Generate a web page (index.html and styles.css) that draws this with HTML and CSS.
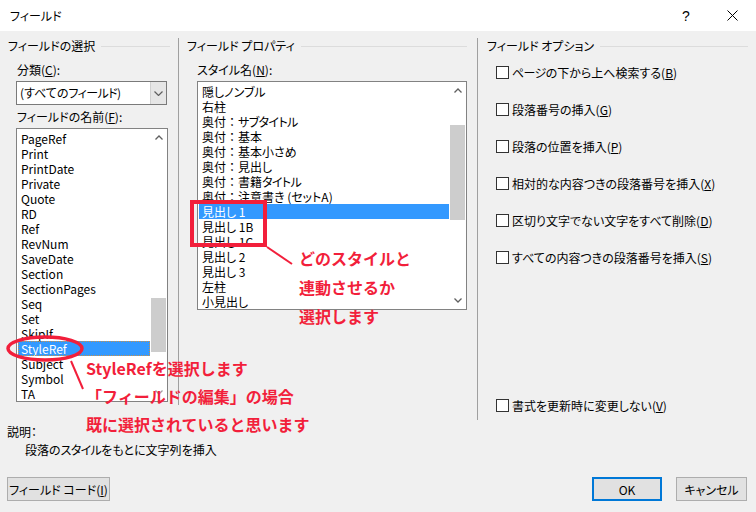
FILE: index.html
```html
<!DOCTYPE html>
<html>
	<head>
		<meta charset="UTF-8">
		<title>フィールド</title>
		<link rel="stylesheet" href="styles.css">
	</head>
	<body>
		<div class="dialog">
			<div class="titlebar">
				<span class="title">フィールド</span>
				<span class="tb-help">?</span>
				<span class="tb-close">
					<svg width="11" height="11" viewBox="0 0 11 11"><path d="M0.5 0.5 L10.5 10.5 M10.5 0.5 L0.5 10.5" stroke="#000" stroke-width="1" fill="none"/></svg>
				</span>
			</div>

			<div class="main">
				<section class="group group-select">
					<div class="group-head"><span>フィールドの選択</span></div>
					<div class="label">分類(<u>C</u>):</div>
					<div class="combo">
						<span class="combo-text">(すべての<span class="kana">フィールド</span>)</span>
						<span class="combo-btn">
							<svg width="9" height="5" viewBox="0 0 9 5"><path d="M0.5 0.5 L4.5 4.5 L8.5 0.5" stroke="#606060" stroke-width="1.2" fill="none"/></svg>
						</span>
					</div>
					<div class="label label-gap">フィールドの名前(<u>F</u>):</div>
					<div class="listbox list-fields">
						<ul class="items">
							<li>PageRef</li>
							<li>Print</li>
							<li>PrintDate</li>
							<li>Private</li>
							<li>Quote</li>
							<li>RD</li>
							<li>Ref</li>
							<li>RevNum</li>
							<li>SaveDate</li>
							<li>Section</li>
							<li>SectionPages</li>
							<li>Seq</li>
							<li>Set</li>
							<li>SkipIf</li>
							<li class="selected">StyleRef</li>
							<li>Subject</li>
							<li>Symbol</li>
							<li>TA</li>
						</ul>
						<div class="sb">
							<span class="sb-arrow"><svg width="8" height="5" viewBox="0 0 8 5"><path d="M0.5 4.5 L4 1 L7.5 4.5" stroke="#606060" stroke-width="1.3" fill="none"/></svg></span>
							<div class="sb-track"><span class="thumb thumb-fields"></span></div>
							<span class="sb-arrow"><svg width="8" height="5" viewBox="0 0 8 5"><path d="M0.5 0.5 L4 4 L7.5 0.5" stroke="#a0a0a0" stroke-width="1.3" fill="none"/></svg></span>
						</div>
					</div>
				</section>

				<section class="group group-props">
					<div class="group-head"><span>フィールド プロパティ</span></div>
					<div class="label">スタイル名(<u>N</u>):</div>
					<div class="listbox list-styles">
						<ul class="items">
							<li>隠しノンブル</li>
							<li>右柱</li>
							<li>奥付<span class="fw">：</span><span class="kana">サブタイトル</span></li>
							<li>奥付<span class="fw">：</span>基本</li>
							<li>奥付<span class="fw">：</span>基本小さめ</li>
							<li>奥付<span class="fw">：</span>見出し</li>
							<li>奥付<span class="fw">：</span>書籍<span class="kana">タイトル</span></li>
							<li>奥付<span class="fw">：</span>注意書き (セットA)</li>
							<li class="selected">見出し 1</li>
							<li>見出し 1B</li>
							<li>見出し 1C</li>
							<li>見出し 2</li>
							<li>見出し 3</li>
							<li>左柱</li>
							<li>小見出し</li>
						</ul>
						<div class="sb">
							<span class="sb-arrow"><svg width="8" height="5" viewBox="0 0 8 5"><path d="M0.5 4.5 L4 1 L7.5 4.5" stroke="#606060" stroke-width="1.3" fill="none"/></svg></span>
							<div class="sb-track"><span class="thumb thumb-styles"></span></div>
							<span class="sb-arrow"><svg width="8" height="5" viewBox="0 0 8 5"><path d="M0.5 0.5 L4 4 L7.5 0.5" stroke="#606060" stroke-width="1.3" fill="none"/></svg></span>
						</div>
					</div>
				</section>

				<section class="group group-opts">
					<div class="group-head"><span>フィールド オプション</span></div>
					<label class="opt opt-first"><span class="check"></span><span class="kana">ページ</span>の下から上へ検索する(<u>B</u>)</label>
					<label class="opt"><span class="check"></span>段落番号の挿入(<u>G</u>)</label>
					<label class="opt"><span class="check"></span>段落の位置を挿入(<u>P</u>)</label>
					<label class="opt"><span class="check"></span>相対的な内容つきの段落番号を挿入(<u>X</u>)</label>
					<label class="opt"><span class="check"></span>区切り文字でない文字をすべて削除(<u>D</u>)</label>
					<label class="opt"><span class="check"></span>すべての内容つきの段落番号を挿入(<u>S</u>)</label>
					<label class="opt opt-last"><span class="check"></span>書式を更新時に変更しない(<u>V</u>)</label>
				</section>
			</div>

			<div class="desc">
				<div class="desc-head">説明：</div>
				<div class="desc-body">段落の<span class="kana">スタイル</span>をもとに文字列を挿入</div>
			</div>

			<div class="actions">
				<button class="btn btn-code">フィールド コード(<u>I</u>)</button>
				<button class="btn btn-ok">OK</button>
				<button class="btn btn-cancel">キャンセル</button>
			</div>

			<!-- 注釈 -->
			<svg class="marks" width="756" height="512" viewBox="0 0 756 512">
				<rect x="192" y="202" width="73" height="43" fill="none" stroke="#f21f3b" stroke-width="4"/>
				<line x1="267" y1="247" x2="292" y2="264" stroke="#f21f3b" stroke-width="2"/>
				<ellipse cx="45" cy="348.5" rx="37" ry="11.5" fill="none" stroke="#f21f3b" stroke-width="3.5"/>
				<line x1="71" y1="361" x2="83" y2="389" stroke="#f21f3b" stroke-width="2"/>
			</svg>
			<div class="note note-style">どのスタイルと<br>連動させるか<br>選択します</div>
			<div class="note note-field">StyleRefを選択します<br>「フィールドの編集」の場合<br>既に選択されていると思います</div>
		</div>
	</body>
</html>
```

FILE: styles.css
```css
* {
	margin: 0;
	padding: 0;
	box-sizing: border-box;
}
body {
	width: 756px;
	height: 512px;
	overflow: hidden;
	background: #f0f0f0;
	color: #000;
	font-family: "Noto Sans CJK JP", "Noto Sans", sans-serif;
	font-size: 12px;
	font-feature-settings: "palt";
}
u {
	text-decoration: underline;
	text-underline-offset: 1px;
}
.fw {
	font-feature-settings: normal;
}
.kana {
	letter-spacing: -0.6px;
}
.dialog {
	position: relative;
	width: 756px;
	height: 512px;
	background: #f0f0f0;
}
.titlebar {
	display: flex;
	align-items: center;
	height: 31px;
	padding-left: 10px;
	padding-right: 1px;
	background: #fff;
}
.title {
	flex: 1;
}
.tb-help {
	width: 46px;
	text-align: center;
	font-family: "Liberation Sans", sans-serif;
	font-size: 14px;
}
.tb-close {
	display: flex;
	justify-content: center;
	width: 46px;
}

.main {
	display: flex;
	align-items: flex-start;
	height: 389px;
}
.group {
	display: flex;
	flex-direction: column;
	margin-top: 7px;
}
.group-head {
	display: flex;
	align-items: center;
	height: 16px;
	line-height: 16px;
	white-space: nowrap;
}
.group-head::after {
	content: "";
	flex: 1;
	margin-left: 6px;
	border-top: 1px solid #dcdcdc;
}
.group-select {
	width: 178px;
	padding: 0 8px;
}
.group-props {
	width: 299px;
	height: 367px;
	padding: 0 10px 0 8px;
	border-left: 1px solid #a0a0a0;
}
.group-opts {
	flex: 1;
	height: 382px;
	padding: 0 8px 7px 9px;
	border-left: 1px solid #a0a0a0;
}
.label {
	margin-top: 8px;
	margin-left: 9px;
	line-height: 16px;
}
.label-gap {
	margin-top: 4px;
}
.group-props .label {
	margin-left: 10px;
}

.combo {
	display: flex;
	width: 151px;
	height: 24px;
	margin-top: 3px;
	margin-left: 8px;
	background: #fff;
	border: 1px solid #7a7a7a;
}
.combo-text {
	flex: 1;
	padding-left: 3px;
	line-height: 22px;
}
.combo-btn {
	display: flex;
	align-items: center;
	justify-content: center;
	width: 16px;
	background: #e6e6e6;
	border-left: 1px solid #d0d0d0;
}

.listbox {
	display: flex;
	margin-top: 3px;
	background: #fff;
	border: 1px solid #828282;
}
.list-fields {
	width: 152px;
	height: 274px;
	margin-left: 8px;
}
.list-styles {
	width: 270px;
	height: 229px;
	margin-left: 10px;
}
.items {
	flex: 1;
	list-style: none;
	padding-top: 2px;
	overflow: hidden;
}
.items li {
	height: 15px;
	padding-left: 3px;
	margin-left: 1px;
	line-height: 15px;
	white-space: nowrap;
}
.items li.selected {
	background: #3399ff;
	color: #fff;
}
.list-fields .items li.selected {
	outline: 1px dotted #c8904a;
	outline-offset: -1px;
}
.sb {
	display: flex;
	flex-direction: column;
	width: 17px;
}
.sb-arrow {
	display: flex;
	align-items: center;
	justify-content: center;
	height: 17px;
}
.sb-track {
	flex: 1;
	display: flex;
	flex-direction: column;
	align-items: center;
}
.thumb {
	display: block;
	width: 15px;
	background: #cdcdcd;
}
.thumb-fields {
	margin-top: 152px;
	height: 54px;
}
.thumb-styles {
	margin-top: 26px;
	height: 95px;
}

.opt {
	display: flex;
	align-items: center;
	height: 16px;
	margin-top: 21px;
	margin-left: 9px;
	white-space: nowrap;
}
.opt-first {
	margin-top: 10px;
}
.opt-last {
	margin-top: auto;
}
.check {
	width: 13px;
	height: 13px;
	margin-right: 3px;
	background: #fff;
	border: 1px solid #333;
}

.desc {
	margin-top: 4px;
	padding-left: 7px;
	line-height: 16px;
}
.desc-body {
	margin-top: 2px;
	padding-left: 18px;
}

.actions {
	display: flex;
	height: 24px;
	margin-top: 19px;
	padding: 0 9px 0 7px;
}
.btn {
	height: 24px;
	background: #e1e1e1;
	border: 1px solid #adadad;
	font-family: inherit;
	font-size: 12px;
	font-feature-settings: "palt";
	color: #000;
}
.btn-code {
	width: 103px;
	margin-right: auto;
}
.btn-ok {
	width: 70px;
	border: 2px solid #0078d7;
	margin-right: 14px;
}
.btn-cancel {
	width: 71px;
}

/* 注釈 */
.marks {
	position: absolute;
	left: 0;
	top: 0;
	pointer-events: none;
}
.note {
	position: absolute;
	color: #f21f3b;
	font-size: 16px;
	font-weight: 700;
	font-feature-settings: normal;
	white-space: nowrap;
}
.note-style {
	left: 299px;
	top: 244px;
	line-height: 29px;
}
.note-field {
	left: 86px;
	top: 354px;
	line-height: 28px;
}
```
